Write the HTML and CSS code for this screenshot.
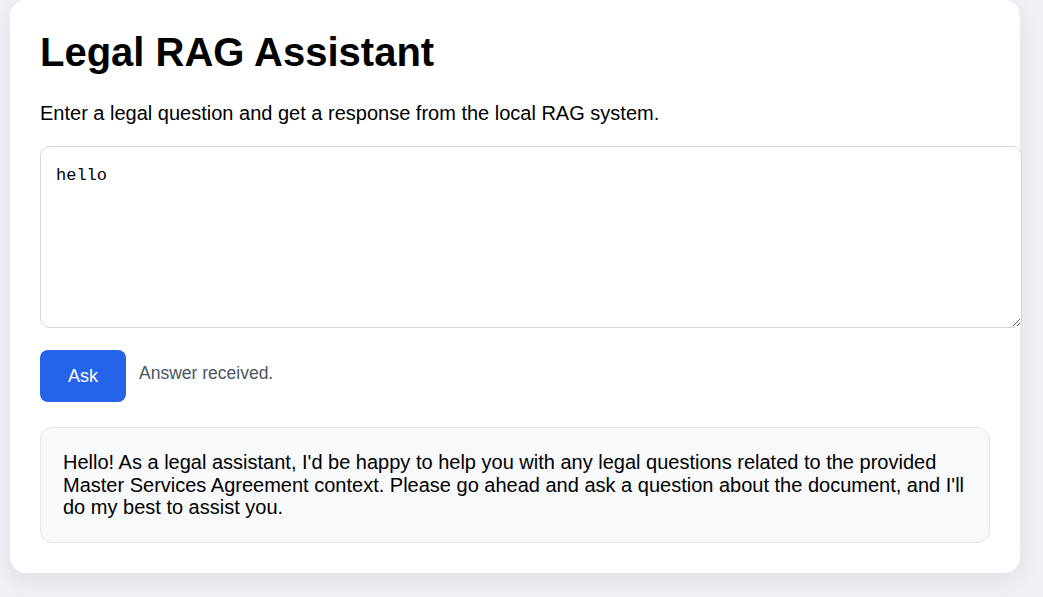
FILE: index.html
```html
<!DOCTYPE html>
<html lang="en">
<head>
<meta charset="utf-8">
<title>Legal RAG Assistant</title>
<link rel="stylesheet" href="styles.css">
</head>
<body>
<main class="card">
  <h1 class="title">Legal RAG Assistant</h1>
  <p class="intro">Enter a legal question and get a response from the local RAG system.</p>
  <textarea class="question">hello</textarea>
  <div class="actions">
    <button class="ask" type="button">Ask</button>
    <span class="status">Answer received.</span>
  </div>
  <div class="answer">Hello! As a legal assistant, I'd be happy to help you with any legal questions related to the provided Master Services Agreement context. Please go ahead and ask a question about the document, and I'll do my best to assist you.</div>
</main>
</body>
</html>
```
FILE: styles.css
```css
html, body {
  margin: 0;
  padding: 0;
}
body {
  background: #f0f1f5;
  font-family: "Liberation Sans", Arial, sans-serif;
  color: #000;
  height: 597px;
  overflow: hidden;
}
.card {
  box-sizing: border-box;
  width: 1010px;
  margin: 0 0 0 10px;
  background: #fff;
  border-radius: 16px;
  padding: 29px 30px 30px 30px;
  box-shadow: 0 8px 24px rgba(20, 30, 60, 0.08);
}
.title {
  margin: 0;
  font-size: 40px;
  font-weight: 700;
  line-height: 46px;
}
.intro {
  margin: 27px 0 0 0;
  font-size: 20px;
  line-height: 23px;
}
.question {
  display: block;
  box-sizing: border-box;
  width: 982px;
  height: 182px;
  margin: 21px 0 0 0;
  padding: 17px 15px;
  border: 1px solid #d4d6db;
  border-radius: 10px;
  font-family: "Liberation Mono", Consolas, monospace;
  font-size: 17px;
  line-height: 24px;
  color: #000;
  resize: vertical;
  outline: none;
}
.actions {
  display: flex;
  align-items: center;
  gap: 13px;
  margin-top: 22px;
}
.ask {
  width: 86px;
  height: 52px;
  border: none;
  border-radius: 8px;
  background: #2563eb;
  color: #fff;
  font-family: "Liberation Sans", Arial, sans-serif;
  font-size: 18px;
  padding: 0;
}
.status {
  font-size: 17.5px;
  color: #4b5563;
  margin-top: -5px;
}
.answer {
  margin-top: 25px;
  border: 1px solid #e5e7eb;
  border-radius: 12px;
  background: #f8f9fb;
  padding: 23px 22px 23px 22px;
  font-size: 20px;
  line-height: 22.5px;
}
```
